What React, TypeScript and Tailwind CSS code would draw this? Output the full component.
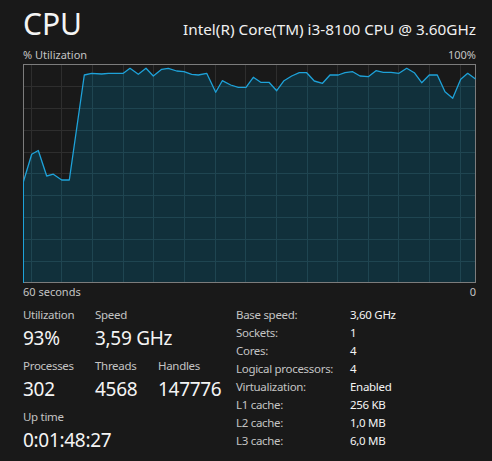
import React from "react";

const PTS: [number, number][] = [
  [23, 183], [31.7, 154.3], [38.3, 150.5], [46.7, 176], [53.3, 174.2], [61.7, 180], [69.3, 180],
  [84.3, 75], [91.7, 73.3], [101.7, 74], [108.3, 73.3], [123.3, 73.3], [130, 68.3], [138.3, 74.3],
  [146, 68.3], [153.3, 76], [161.7, 69.3], [168.3, 68.3], [176.7, 71], [184, 71.7], [191.7, 74.3],
  [198.3, 75], [206.7, 73.3], [215.7, 92.3], [222.3, 80.7], [230.7, 85], [238.3, 87.3], [246, 87.3],
  [253.3, 77.3], [260.7, 82.3], [269, 82.3], [276.7, 90.7], [284, 80.7], [291.7, 76], [299.3, 72.7],
  [306.7, 72.7], [314.3, 81], [322.5, 83.3], [330, 75], [338.3, 75], [345, 72.7], [352.7, 71.7],
  [360, 76], [368.3, 76.7], [376, 70.7], [383.3, 72.3], [391, 72.3], [399, 73.3], [406.7, 68.3],
  [414.3, 72.7], [421.7, 82.7], [429.3, 75], [437.3, 75], [445, 91.7], [452.7, 98.3], [460.7, 79.3],
  [467.7, 73.3], [475.5, 79],
];

const VX = [31, 61, 92, 123, 153, 184, 215, 245, 276, 307, 337, 368, 398, 429, 460];
const HY = [86, 108, 130, 152, 173, 195, 217, 239, 261];

function Grid({ color }: { color: string }) {
  return (
    <g stroke={color} strokeWidth={1}>
      {VX.map((x) => (
        <line key={"v" + x} x1={x + 0.5} y1={64} x2={x + 0.5} y2={283} />
      ))}
      {HY.map((y) => (
        <line key={"h" + y} x1={23} y1={y + 0.5} x2={476} y2={y + 0.5} />
      ))}
    </g>
  );
}

function Graph() {
  const line = PTS.map((p) => p.join(",")).join(" ");
  const poly = line + " 475.5,282.5 23.5,282.5";
  return (
    <svg width={453} height={219} viewBox="23 64 453 219" className="block">
      <defs>
        <clipPath id="fillclip">
          <polygon points={poly} />
        </clipPath>
      </defs>
      <Grid color="#2e2e2e" />
      <polygon points={poly} fill="#11303b" />
      <g clipPath="url(#fillclip)">
        <Grid color="#1f4551" />
      </g>
      <rect x={23.5} y={64.5} width={452} height={218} fill="none" stroke="#7c7c7c" strokeWidth={1} />
      <polyline points={line} fill="none" stroke="#1ea2d9" strokeWidth={1.3} strokeLinejoin="round" />
      <line x1={23.5} y1={183} x2={23.5} y2={283} stroke="#1ea2d9" strokeWidth={1} />
    </svg>
  );
}

function Stat({ label, value, w }: { label: string; value: string; w: string }) {
  return (
    <div className={w}>
      <div className="text-[11.5px] leading-[16px] tracking-[-0.3px] text-[#c4c4c4] whitespace-nowrap">{label}</div>
      <div className="mt-[4px] text-[19px] leading-[22px] tracking-[-0.3px] text-[#f4f4f4] whitespace-nowrap">
        {value}
      </div>
    </div>
  );
}

const INFO: [string, string][] = [
  ["Base speed:", "3,60 GHz"],
  ["Sockets:", "1"],
  ["Cores:", "4"],
  ["Logical processors:", "4"],
  ["Virtualization:", "Enabled"],
  ["L1 cache:", "256 KB"],
  ["L2 cache:", "1,0 MB"],
  ["L3 cache:", "6,0 MB"],
];

export default function App() {
  return (
    <div
      className="w-[492px] h-[461px] bg-[#191919] pl-[23px] pt-[9px] overflow-hidden"
      style={{ fontFamily: '"Noto Sans", "Open Sans", sans-serif' }}
    >
      <div className="h-[30px] w-[453px] flex items-baseline justify-between">
        <div className="text-[30px] leading-[30px] text-[#f4f4f4]">CPU</div>
        <div className="text-[15.3px] leading-[18px] text-[#f0f0f0]">
          Intel(R) Core(TM) i3-8100 CPU @ 3.60GHz
        </div>
      </div>
      <div className="mt-[9px] w-[453px] flex justify-between text-[11px] leading-[14px] text-[#c4c4c4]">
        <span>% Utilization</span>
        <span>100%</span>
      </div>
      <div className="mt-[2px]">
        <Graph />
      </div>
      <div className="mt-[2px] w-[453px] flex justify-between text-[11px] leading-[14px] text-[#c4c4c4]">
        <span>60 seconds</span>
        <span>0</span>
      </div>
      <div className="mt-[7px] flex">
        <div className="w-[213px] pt-[1px] flex flex-col gap-[9px]">
          <div className="flex">
            <Stat w="w-[72px]" label="Utilization" value="93%" />
            <Stat w="w-[63px]" label="Speed" value="3,59 GHz" />
          </div>
          <div className="flex">
            <Stat w="w-[72px]" label="Processes" value="302" />
            <Stat w="w-[63px]" label="Threads" value="4568" />
            <Stat w="w-[70px]" label="Handles" value="147776" />
          </div>
          <div className="flex">
            <Stat w="w-[120px]" label="Up time" value="0:01:48:27" />
          </div>
        </div>
        <div className="flex flex-col">
          {INFO.map(([k, v]) => (
            <div key={k} className="flex text-[11.5px] leading-[18px] tracking-[-0.3px]">
              <span className="w-[114px] text-[#c4c4c4]">{k}</span>
              <span className="text-[#f4f4f4]">{v}</span>
            </div>
          ))}
        </div>
      </div>
    </div>
  );
}
